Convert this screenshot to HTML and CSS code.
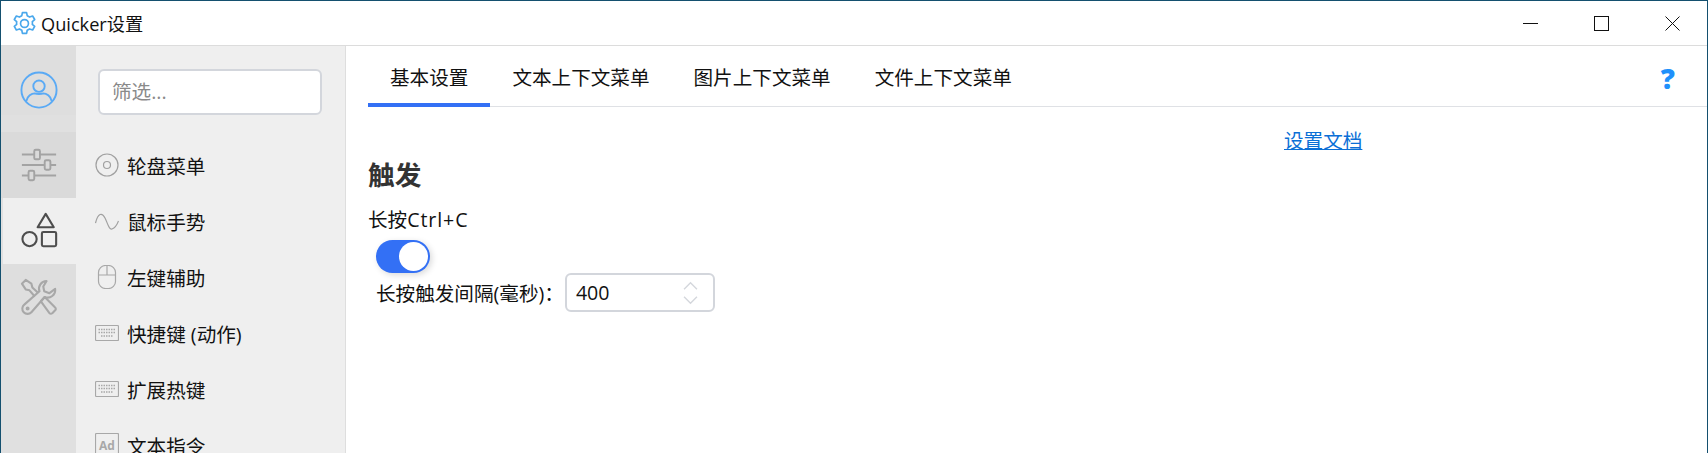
FILE: index.html
```html
<!DOCTYPE html>
<html lang="zh-CN">
<head>
  <meta charset="UTF-8" />
  <title>Quicker设置</title>
  <link rel="stylesheet" href="styles.css">
</head>
<body>
<div class="window">

  <!-- Barre de titre -->
  <div class="titlebar">
    <svg class="app-icon" viewBox="0 0 24 24" fill="none" stroke="#4aa8ec" stroke-width="1.6" stroke-linejoin="round">
      <path d="M10 1.5h4l.6 3 2.3 1.3 2.9-1 2 3.4-2.3 2a7 7 0 0 1 0 2.6l2.3 2-2 3.4-2.9-1-2.3 1.3-.6 3h-4l-.6-3-2.3-1.3-2.9 1-2-3.4 2.3-2a7 7 0 0 1 0-2.6l-2.3-2 2-3.4 2.9 1 2.3-1.300z"/>
      <circle cx="12" cy="12" r="3.800"/>
    </svg>
    <span class="title">Quicker设置</span>
    <div class="win-buttons">
      <svg class="win-btn" viewBox="0 0 15 15" stroke="#111" fill="none"><path d="M0 7.500h15"/></svg>
      <svg class="win-btn" viewBox="0 0 15 15" stroke="#111" fill="none"><rect x="0.500" y="0.500" width="14" height="14"/></svg>
      <svg class="win-btn" viewBox="0 0 15 15" stroke="#111" fill="none"><path d="M0.500 0.500l14 14M14.500 0.500l-14 14"/></svg>
    </div>
  </div>

  <div class="body">
    <!-- Rail -->
    <div class="rail">
      <div class="rail-item rail-first">
        <svg viewBox="0 0 40 40" fill="none" stroke="#5aaaf5" stroke-width="2">
          <circle cx="20" cy="20" r="18.500"/>
          <circle cx="20" cy="16" r="6"/>
          <path d="M6.500 32c1-6 6-8.500 9-8.500 2 1 7 1 9 0 3 0 8 2.500 9 8.500"/>
        </svg>
      </div>
      <div class="rail-item rail-dark">
        <svg viewBox="0 0 40 40" fill="none" stroke="#a3a3a3" stroke-width="2">
          <path d="M2 9h13M21 9h17M2 20h24M32 20h6M2 31h7M15 31h23"/>
          <rect x="15" y="4" width="6" height="10" rx="1.500"/>
          <rect x="26" y="15" width="6" height="10" rx="1.500"/>
          <rect x="9" y="26" width="6" height="10" rx="1.500"/>
        </svg>
      </div>
      <div class="rail-item rail-active">
        <svg viewBox="0 0 40 40" fill="none" stroke="#4d4d4d" stroke-width="2.200" stroke-linejoin="round">
          <path d="M26 2l8.500 14h-17z"/>
          <circle cx="9" cy="28.500" r="7.500"/>
          <rect x="22" y="21" width="15" height="15" rx="1.500"/>
        </svg>
      </div>
      <div class="rail-item rail-tools">
        <svg viewBox="0 0 40 40" fill="none" stroke="#a8a8a8" stroke-width="2.200" stroke-linejoin="round">
          <path d="M19 15.500L13 10l-1-4-6-4-4 4 4 6 4 1 5.500 6.500"/>
          <path d="M22 24.500l4-4.500 11 11a2 2 0 0 1 0 3l-3 3a2 2 0 0 1-3 0z"/>
          <path d="M28 3.200A8 8 0 0 0 20.500 14L4.500 28A5.500 5.500 0 1 0 12 36L26 20A8 8 0 0 0 37 11.500L31 16l-5.500-2-1-5z"/>
          <circle cx="8" cy="32" r="1" fill="#a8a8a8"/>
        </svg>
      </div>
    </div>

    <!-- Liste -->
    <div class="sidebar">
      <div class="filter">筛选...</div>
      <div class="menu">
        <div class="menu-item">
          <svg viewBox="0 0 24 24" fill="none" stroke="#a0a0a0" stroke-width="1.200"><circle cx="12" cy="12" r="11"/><circle cx="12" cy="12" r="3.500"/></svg>
          轮盘菜单
        </div>
        <div class="menu-item">
          <svg viewBox="0 0 24 24" fill="none" stroke="#a0a0a0" stroke-width="1.200"><path d="M0.500 14C3 4 7 3 10 9s4 12 7 11 5-4 6.500-8"/></svg>
          鼠标手势
        </div>
        <div class="menu-item">
          <svg viewBox="0 0 24 24" fill="none" stroke="#a8a8a8" stroke-width="1.200"><rect x="3.500" y="0.500" width="17" height="23" rx="7"/><path d="M3.500 10h17M12 0.500V10"/></svg>
          左键辅助
        </div>
        <div class="menu-item">
          <svg viewBox="0 0 24 24" fill="none" stroke="#a8a8a8" stroke-width="1.200"><rect x="0.500" y="4.500" width="23" height="15" rx="1"/><path d="M3.500 8.500h17M3.500 11.500h17M6 15h12" stroke-dasharray="1.500 1" stroke-width="1.500"/></svg>
          快捷键 (动作)
        </div>
        <div class="menu-item">
          <svg viewBox="0 0 24 24" fill="none" stroke="#a8a8a8" stroke-width="1.200"><rect x="0.500" y="4.500" width="23" height="15" rx="1"/><path d="M3.500 8.500h17M3.500 11.500h17M6 15h12" stroke-dasharray="1.500 1" stroke-width="1.500"/></svg>
          扩展热键
        </div>
        <div class="menu-item">
          <svg viewBox="0 0 24 24" fill="none" stroke="#a8a8a8" stroke-width="1.200"><rect x="0.500" y="0.500" width="23" height="23" rx="1"/><text x="12" y="17" class="ad-text">Ad</text></svg>
          文本指令
        </div>
      </div>
    </div>

    <!-- Contenu principal -->
    <div class="main">
      <div class="tabs">
        <div class="tab active">基本设置</div>
        <div class="tab">文本上下文菜单</div>
        <div class="tab">图片上下文菜单</div>
        <div class="tab">文件上下文菜单</div>
        <div class="help">?</div>
      </div>
      <div class="content">
        <div class="doc-row"><a class="doc-link" href="#">设置文档</a></div>
        <h2>触发</h2>
        <div class="label">长按<span class="keys">Ctrl+C</span></div>
        <div class="switch"><div class="knob"></div></div>
        <div class="field">
          <span>长按触发间隔(毫秒)：</span>
          <div class="number">
            400
            <svg class="spin" viewBox="0 0 16 26" fill="none" stroke="#d4d7dc" stroke-width="1.500"><path d="M1 9l7-7 7 7M1 17l7 7 7-7"/></svg>
          </div>
        </div>
      </div>
    </div>
  </div>
</div>
</body>
</html>
```

FILE: styles.css
```css
* {
  box-sizing: border-box;
}

html, body {
  margin: 0;
  height: 100%;
  overflow: hidden;
}

body {
  font-family: "Open Sans", "Noto Sans CJK SC", sans-serif;
  color: #111;
  background: white;
}

.window {
  height: 453px;
  border: 1px solid #14506f;
  border-bottom: none;
  display: flex;
  flex-direction: column;
}

.titlebar {
  height: 45px;
  flex: none;
  display: flex;
  align-items: center;
  padding-left: 11px;
  border-bottom: 1px solid #dcdcdc;
}

.app-icon {
  width: 25px;
  height: 25px;
}

.title {
  margin-left: 4px;
  font-size: 18.200px;
  color: #111;
}

.win-buttons {
  margin-left: auto;
  display: flex;
  gap: 56px;
  padding-right: 27px;
}

.win-btn {
  width: 15px;
  height: 15px;
}

.body {
  flex: 1;
  display: flex;
  min-height: 0;
}

.rail {
  width: 75px;
  flex: none;
  background: #e0e0e0;
}

.rail-item {
  height: 66px;
  display: flex;
  align-items: center;
  justify-content: center;
}

.rail-item svg {
  width: 38px;
  height: 38px;
}

.rail-first {
  height: 69px;
  margin-bottom: 17px;
  padding-top: 19px;
  background: #dedede;
}

.rail-dark {
  background: #dadada;
}

.rail-active {
  background: #efefef;
  margin-left: 2px;
}

.rail-tools {
  background: #dedede;
}

.sidebar {
  width: 270px;
  flex: none;
  background: #efefef;
  border-right: 1px solid #dedede;
  padding: 23px 22px 0 22px;
  overflow: hidden;
}

.filter {
  width: 224px;
  height: 46px;
  background: white;
  border: 2px solid #d3d6dc;
  border-radius: 6px;
  padding-left: 12px;
  line-height: 42px;
  font-size: 19.600px;
  color: #8a8a8a;
}

.menu {
  margin-top: 22px;
  margin-left: -3px;
}

.menu-item {
  height: 56px;
  display: flex;
  align-items: center;
  gap: 8px;
  font-size: 19.600px;
  color: #111;
  white-space: nowrap;
}

.menu-item svg {
  width: 24px;
  height: 24px;
  flex: none;
}

.ad-text {
  font-family: "Open Sans", sans-serif;
  font-size: 12px;
  font-weight: 700;
  fill: #a8a8a8;
  stroke: none;
  text-anchor: middle;
}

.main {
  flex: 1;
  min-width: 0;
  background: white;
}

.tabs {
  display: flex;
  margin-left: 22px;
  height: 61px;
  border-bottom: 1px solid #dfe1e5;
}

.tab {
  height: 61px;
  padding: 20px 22px 0 22px;
  font-size: 19.600px;
  line-height: 24px;
  color: #111;
}

.tab.active {
  border-bottom: 4px solid #3370f5;
}

.help {
  margin-left: auto;
  margin-right: 32px;
  margin-top: 15px;
  font-size: 28px;
  line-height: 34px;
  font-weight: 800;
  color: #2090fb;
}

.content {
  padding: 0 22px;
}

.doc-row {
  padding-left: 916px;
  margin-top: 22px;
  line-height: 24px;
}

.doc-link {
  font-size: 19.600px;
  color: #0b6fd6;
}

h2 {
  margin: 4px 0 0 0;
  font-size: 26.700px;
  line-height: 34px;
  font-weight: 700;
  color: #333;
}

.label {
  margin-top: 16px;
  font-size: 19.600px;
  line-height: 24px;
}

.keys {
  letter-spacing: 0.900px;
}

.switch {
  margin: 8px 0 0 8px;
  width: 54px;
  height: 33px;
  border-radius: 17px;
  background: #3370f5;
  padding: 2px 1px 2px 23px;
  box-shadow: 2px 2px 6px rgba(0, 0, 0, 0.15);
}

.knob {
  width: 29px;
  height: 29px;
  border-radius: 50%;
  background: white;
}

.field {
  display: flex;
  align-items: center;
  margin: 0 0 0 8px;
  font-size: 19.600px;
}

.number {
  width: 150px;
  height: 39px;
  margin-left: 1px;
  border: 2px solid #d3d6dc;
  border-radius: 6px;
  padding-left: 9px;
  padding-right: 15px;
  display: flex;
  align-items: center;
  justify-content: space-between;
}

.spin {
  width: 15px;
  height: 24px;
}
```
